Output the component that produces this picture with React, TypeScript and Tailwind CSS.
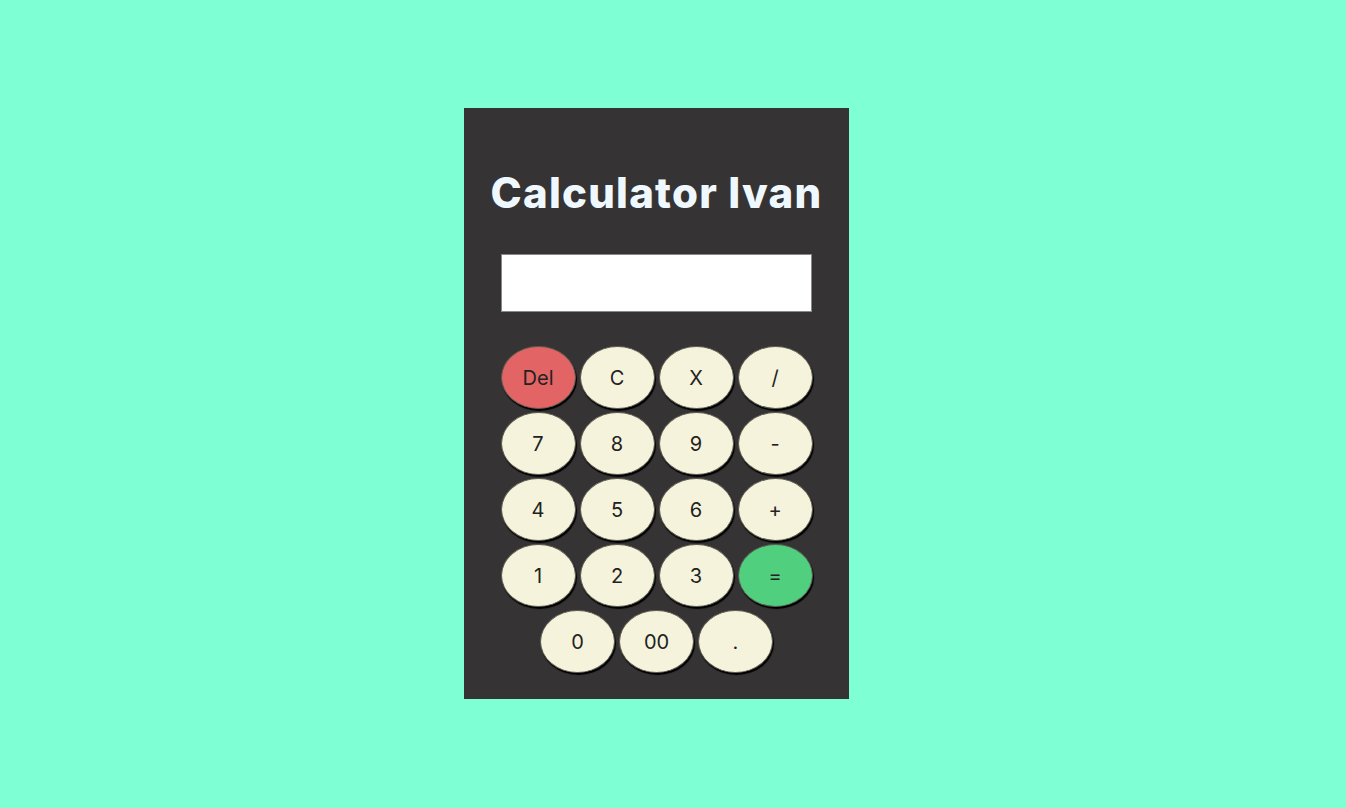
const rows = [
  ["Del", "C", "X", "/"],
  ["7", "8", "9", "-"],
  ["4", "5", "6", "+"],
  ["1", "2", "3", "="],
  ["0", "00", "."],
];

function Key({ label }: { label: string }) {
  const bg =
    label === "Del" ? "bg-[#e36464]" : label === "=" ? "bg-[#50d07f]" : "bg-[#f5f3dc]";
  return (
    <button
      className={`w-[75px] h-[63px] rounded-[50%] ${bg} border border-[#5a5a50] shadow-[1px_2px_1px_#000] text-[20px] font-normal text-[#222] font-[Inter,sans-serif] flex items-center justify-center`}
    >
      {label}
    </button>
  );
}

export default function App() {
  return (
    <div className="min-h-screen bg-[#7fffd4] flex pt-[108px] pl-[464px]">
      <div className="w-[385px] h-[591px] bg-[#363334] flex flex-col items-center pt-[61px]">
        {/* title */}
        <h1 className="text-[42px] leading-[48px] font-extrabold text-[#f0f8ff] tracking-[1.2px] font-[Inter,sans-serif]">
          Calculator Ivan
        </h1>

        {/* display */}
        <div className="mt-[37px] w-[311px] h-[58px] bg-white border border-[#888]" />

        {/* keys */}
        <div className="mt-[34px] w-[312px] flex flex-col gap-y-[3px]">
          {rows.map((row, i) => (
            <div key={i} className="flex justify-center gap-x-[4px]">
              {row.map((k) => (
                <Key key={k} label={k} />
              ))}
            </div>
          ))}
        </div>
      </div>
    </div>
  );
}
